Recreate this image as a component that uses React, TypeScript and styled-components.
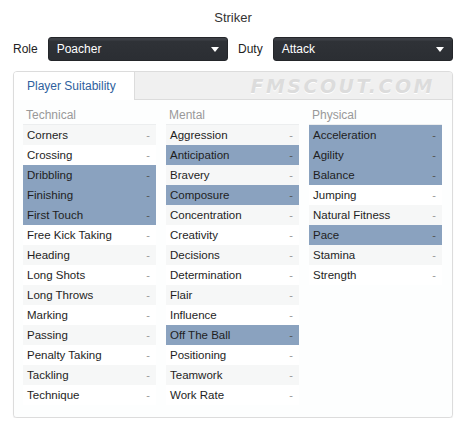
import React from 'react';
import styled, { createGlobalStyle } from 'styled-components';

const GlobalStyle = createGlobalStyle`
  body {
    margin: 0;
    background: #ffffff;
    font-family: "Liberation Sans", Arial, sans-serif;
    color: #222;
  }
`;

const Page = styled.div`
  width: 466px;
  padding: 10px 13px 0 13px;
  box-sizing: border-box;
`;

const Title = styled.div`
  text-align: center;
  font-size: 13px;
  line-height: 16px;
  color: #333;
`;

const Controls = styled.div`
  display: flex;
  align-items: center;
  margin-top: 11px;
  height: 24px;
`;

const Label = styled.span`
  font-size: 12px;
  color: #222;
  margin-right: 10px;
`;

const Select = styled.div`
  flex: 1;
  height: 24px;
  box-sizing: border-box;
  background: linear-gradient(#3d4046 0, #3d4046 2px, #2f3237 3px, #2b2e33 100%);
  border: 1px solid #24262a;
  border-radius: 3px;
  color: #fff;
  font-size: 12px;
  display: flex;
  align-items: center;
  justify-content: space-between;
  padding: 0 8px 0 8px;
  & + ${Label} {
    margin-left: 10px;
  }
`;

const Caret = styled.span`
  width: 0;
  height: 0;
  border-left: 4px solid transparent;
  border-right: 4px solid transparent;
  border-top: 5px solid #fff;
`;

const Panel = styled.div`
  margin-top: 10px;
  border: 1px solid #dcdcdc;
  border-radius: 4px;
  background: #fafafa;
  box-shadow: 0 1px 1px rgba(0, 0, 0, 0.08);
  overflow: hidden;
`;

const TabBar = styled.div`
  display: flex;
  height: 27px;
  background: #f0f0f0;
  border-bottom: 1px solid #dcdcdc;
`;

const Tab = styled.div`
  width: 121px;
  background: #fff;
  border-right: 1px solid #dcdcdc;
  margin-bottom: -1px;
  color: #2f5f9e;
  font-size: 12px;
  display: flex;
  align-items: center;
  padding-left: 13px;
  box-sizing: border-box;
`;

const Watermark = styled.div`
  flex: 1;
  display: flex;
  align-items: center;
  justify-content: flex-end;
  padding-right: 17px;
  font-family: "DejaVu Sans", sans-serif;
  font-weight: bold;
  font-style: italic;
  font-size: 19px;
  letter-spacing: 2.5px;
  color: #dcdcdc;
  text-shadow: 0 1px 0 #fff;
`;

const Body = styled.div`
  display: grid;
  grid-template-columns: repeat(3, 133px);
  column-gap: 10px;
  padding: 7px 10px 12px 9px;
  background: #fdfefe;
`;

const Column = styled.div`
  display: flex;
  flex-direction: column;
`;

const Heading = styled.div`
  font-size: 12px;
  color: #999;
  height: 17px;
  line-height: 16px;
  padding-left: 3px;
  border-bottom: 1px solid #eceeef;
`;

const Row = styled.div<{ $on: boolean; $alt: boolean }>`
  display: flex;
  justify-content: space-between;
  align-items: center;
  height: 20px;
  padding: 0 6px 0 4px;
  font-size: 11.5px;
  color: #1e1e1e;
  background: ${(p) => (p.$on ? '#8aa2bf' : p.$alt ? '#f6f7f7' : '#ffffff')};
`;

const Dash = styled.span<{ $on: boolean }>`
  color: ${(p) => (p.$on ? '#555' : '#999')};
  font-size: 11px;
`;

type Attr = [string, boolean];

const columns: { title: string; attrs: Attr[] }[] = [
  {
    title: 'Technical',
    attrs: [
      ['Corners', false],
      ['Crossing', false],
      ['Dribbling', true],
      ['Finishing', true],
      ['First Touch', true],
      ['Free Kick Taking', false],
      ['Heading', false],
      ['Long Shots', false],
      ['Long Throws', false],
      ['Marking', false],
      ['Passing', false],
      ['Penalty Taking', false],
      ['Tackling', false],
      ['Technique', false],
    ],
  },
  {
    title: 'Mental',
    attrs: [
      ['Aggression', false],
      ['Anticipation', true],
      ['Bravery', false],
      ['Composure', true],
      ['Concentration', false],
      ['Creativity', false],
      ['Decisions', false],
      ['Determination', false],
      ['Flair', false],
      ['Influence', false],
      ['Off The Ball', true],
      ['Positioning', false],
      ['Teamwork', false],
      ['Work Rate', false],
    ],
  },
  {
    title: 'Physical',
    attrs: [
      ['Acceleration', true],
      ['Agility', true],
      ['Balance', true],
      ['Jumping', false],
      ['Natural Fitness', false],
      ['Pace', true],
      ['Stamina', false],
      ['Strength', false],
    ],
  },
];

const App: React.FC = () => {
  return (
    <Page>
      <GlobalStyle />
      <Title>Striker</Title>
      <Controls>
        <Label>Role</Label>
        <Select>
          <span>Poacher</span>
          <Caret />
        </Select>
        <Label>Duty</Label>
        <Select>
          <span>Attack</span>
          <Caret />
        </Select>
      </Controls>
      <Panel>
        <TabBar>
          <Tab>Player Suitability</Tab>
          <Watermark>FMSCOUT.COM</Watermark>
        </TabBar>
        <Body>
          {columns.map((col) => (
            <Column key={col.title}>
              <Heading>{col.title}</Heading>
              {col.attrs.map(([name, on], i) => (
                <Row key={name} $on={on} $alt={i % 2 === 0}>
                  <span>{name}</span>
                  <Dash $on={on}>-</Dash>
                </Row>
              ))}
            </Column>
          ))}
        </Body>
      </Panel>
    </Page>
  );
};

export default App;
